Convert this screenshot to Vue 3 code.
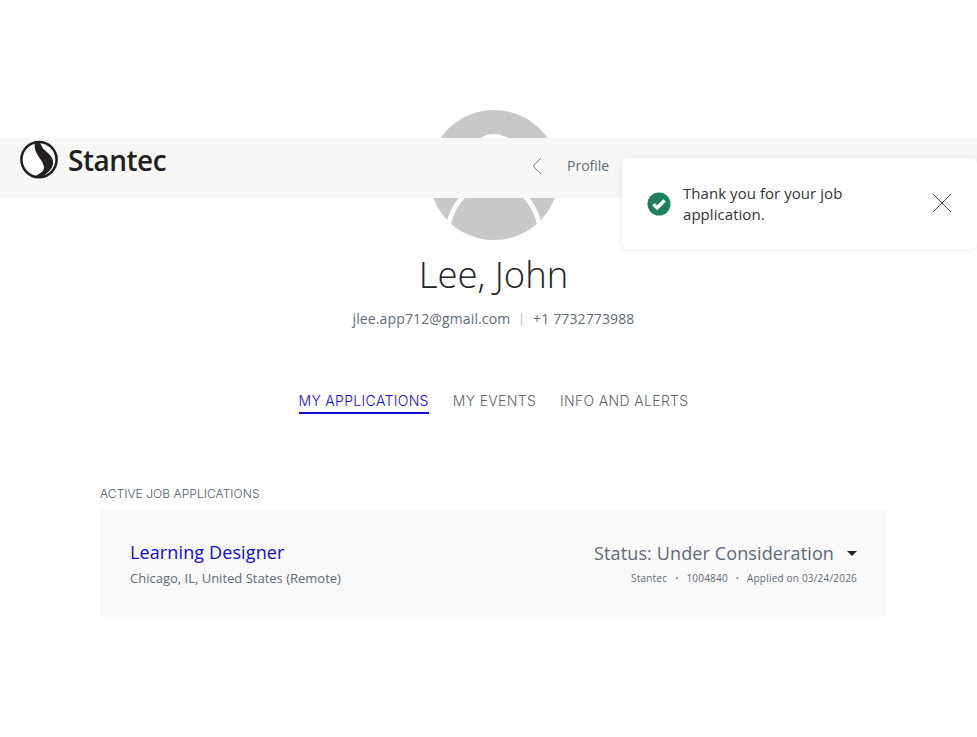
<script setup>
const tabs = [
  { label: 'MY APPLICATIONS', active: true },
  { label: 'MY EVENTS', active: false },
  { label: 'INFO AND ALERTS', active: false }
]
</script>

<template>
  <div class="page">
    <header class="bar">
      <a class="logo">
        <svg class="mark" width="40" height="40" viewBox="0 0 40 40">
          <circle cx="20" cy="19.6" r="17.6" fill="#fff" stroke="#231f20" stroke-width="2.6" />
          <path d="M16 1.5C15 6 16 11 18 14C20 18 24.5 22 25 27C25.5 31 20 35 13 37C18 38 22 37.5 25 35.5C30 32 35 27 34 21C33 15 27 12 24 8.5C22.5 6 21.5 4 21 2Z" fill="#231f20" />
        </svg>
        <span class="wordmark">Stantec</span>
      </a>
      <nav class="crumb">
        <svg class="chev" width="10" height="18" viewBox="0 0 10 18">
          <path d="M9 1L1.2 9L9 17" fill="none" stroke="#74808a" stroke-width="1" />
        </svg>
        <span>Profile</span>
      </nav>
    </header>

    <aside class="toast">
      <svg class="ok" width="24" height="24" viewBox="0 0 24 24">
        <circle cx="12" cy="12" r="11.5" fill="#1f8060" />
        <path d="M6.4 12.2L10.2 15.8L17.6 8.4" fill="none" stroke="#fff" stroke-width="3.4" />
      </svg>
      <p>Thank you for your job application.</p>
      <svg class="close" width="20" height="20" viewBox="0 0 20 20">
        <path d="M1 1L19 19M19 1L1 19" fill="none" stroke="#4a4a4a" stroke-width="1" />
      </svg>
    </aside>

    <div class="column">
      <section class="profile">
        <svg class="avatar" width="130" height="130" viewBox="0 0 130 130">
          <defs>
            <clipPath id="avatarClip"><circle cx="65" cy="65" r="65" /></clipPath>
          </defs>
          <g clip-path="url(#avatarClip)">
            <rect width="130" height="130" fill="#c8c8c8" />
            <circle cx="65" cy="50" r="26" fill="#fff" />
            <ellipse cx="65" cy="130" rx="49.5" ry="60" fill="#fff" />
            <ellipse cx="65" cy="130" rx="45" ry="55" fill="#c8c8c8" />
          </g>
        </svg>
        <h1>Lee, John</h1>
        <p class="contact">
          <span>jlee.app712@gmail.com</span>
          <i>|</i>
          <span>+1 7732773988</span>
        </p>
      </section>

      <nav class="tabs">
        <a v-for="tab in tabs" :key="tab.label" class="tab" :class="{ active: tab.active }">{{ tab.label }}</a>
      </nav>

      <main class="list">
        <h2>ACTIVE JOB APPLICATIONS</h2>
        <article class="card">
          <div class="job">
            <a class="title">Learning Designer</a>
            <p class="place">Chicago, IL, United States (Remote)</p>
          </div>
          <div class="state">
            <div class="status">
              <span>Status: Under Consideration</span>
              <b class="caret"></b>
            </div>
            <p class="meta">
              <span>Stantec</span><i>•</i><span>1004840</span><i>•</i><span>Applied on 03/24/2026</span>
            </p>
          </div>
        </article>
      </main>
    </div>
  </div>
</template>

<style>
html, body { margin: 0; background: #fff; }
</style>

<style scoped>
.page {
  position: relative;
  width: 977px;
  height: 737px;
  overflow: hidden;
  background: #fff;
  font-family: "Open Sans", "Liberation Sans", sans-serif;
  color: #5f6b76;
}
.column {
  width: 787px;
  margin-left: 100px;
}
.bar {
  position: absolute;
  top: 138px;
  left: 0;
  right: 0;
  height: 60px;
  display: flex;
  align-items: center;
  background: #f7f7f5;
}
.logo {
  display: flex;
  align-items: center;
  margin-left: 19px;
  gap: 9px;
  margin-top: -16px;
}
.wordmark {
  font-size: 28px;
  font-weight: 600;
  color: #231f20;
  letter-spacing: -0.5px;
  line-height: 40px;
}
.crumb {
  position: absolute;
  left: 532px;
  top: 19px;
  display: flex;
  align-items: center;
  gap: 25px;
  font-size: 14px;
  line-height: 18px;
  color: #5f6b76;
}
.toast {
  position: absolute;
  top: 158px;
  left: 622px;
  width: 355px;
  height: 91px;
  box-sizing: border-box;
  display: flex;
  align-items: center;
  padding: 0 25px;
  background: #fff;
  border-radius: 6px;
  box-shadow: 0 1px 6px rgba(0, 0, 0, 0.09);
  z-index: 2;
}
.toast p {
  margin: 0 0 0 12px;
  width: 200px;
  font-size: 15px;
  line-height: 21px;
  letter-spacing: 0.05px;
  color: #333;
}
.close { margin-left: auto; margin-top: -2px; }
.profile {
  display: flex;
  flex-direction: column;
  align-items: center;
  padding-top: 110px;
}
.avatar { display: block; }
h1 {
  margin: 8px 0 0;
  font-size: 36.5px;
  line-height: 52px;
  font-weight: 300;
  color: #222;
}
.contact {
  margin: 9px 0 0;
  font-size: 14px;
  line-height: 20px;
  letter-spacing: 0.13px;
  display: flex;
  gap: 8px;
}
.contact i {
  font-style: normal;
  color: #b5b5b5;
  font-size: 12px;
}
.tabs {
  display: flex;
  justify-content: center;
  gap: 24px;
  margin-top: 62px;
}
.tab {
  font-family: Inter, "Noto Sans", sans-serif;
  font-size: 14px;
  font-weight: 300;
  line-height: 20px;
  letter-spacing: 0.33px;
  padding-bottom: 1px;
  color: #5f666c;
  border-bottom: 2px solid transparent;
}
.tab.active {
  color: #1208d8;
  border-bottom-color: #1208d8;
}
.list { margin-top: 71px; }
h2 {
  margin: 0;
  font-family: Inter, "Noto Sans", sans-serif;
  font-size: 12px;
  font-weight: 300;
  line-height: 18px;
  letter-spacing: 0.06px;
  color: #4f5a64;
}
.card {
  display: flex;
  justify-content: space-between;
  height: 107px;
  box-sizing: border-box;
  margin-top: 7px;
  padding: 29px 30px 0;
  background: #f9f9f9;
}
.title {
  display: block;
  font-size: 18px;
  line-height: 26px;
  letter-spacing: 0.12px;
  color: #1208d8;
}
.place {
  margin: 3px 0 0;
  font-size: 13px;
  line-height: 20px;
  color: #5f6b76;
}
.state { text-align: right; }
.status {
  display: flex;
  align-items: center;
  justify-content: flex-end;
  padding-top: 1px;
  font-size: 18px;
  line-height: 26px;
  letter-spacing: 0.12px;
  color: #5f6b76;
}
.caret {
  width: 0;
  height: 0;
  margin-left: 13px;
  border-left: 5px solid transparent;
  border-right: 5px solid transparent;
  border-top: 5px solid #222;
}
.meta {
  margin: 4px 0 0;
  font-size: 10px;
  line-height: 16px;
  letter-spacing: 0.2px;
  display: flex;
  justify-content: flex-end;
  gap: 8px;
}
.meta i { font-style: normal; font-size: 8px; }
</style>
